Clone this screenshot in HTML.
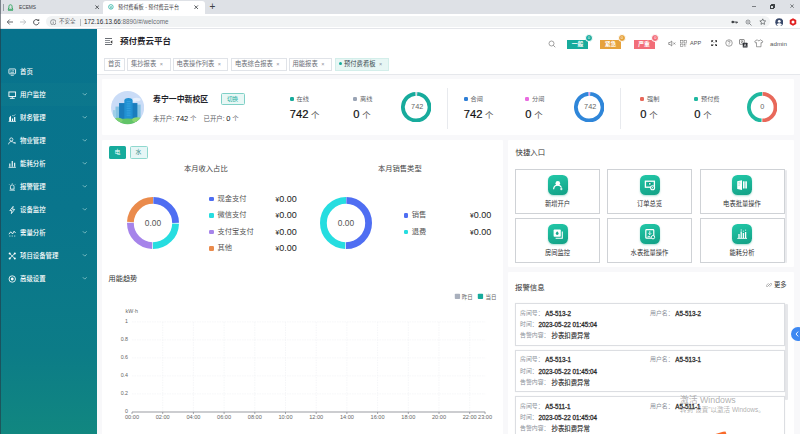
<!DOCTYPE html>
<html lang="zh-CN">
<head>
<meta charset="utf-8">
<title>预付费看板 - 预付费云平台</title>
<style>
*{box-sizing:border-box;margin:0;padding:0}
html,body{width:800px;height:434px;overflow:hidden;background:#f8f8fa}
body{position:relative;font-family:"Liberation Sans","Noto Sans CJK SC",sans-serif;color:#303133;font-size:6px;line-height:1}
.a{position:absolute;white-space:nowrap}
.t{position:absolute;white-space:nowrap;transform:translateY(-50%);line-height:1}
.c{position:absolute;white-space:nowrap;transform:translate(-50%,-50%);line-height:1}
/* browser chrome */
#tabbar{left:0;top:0;width:800px;height:14px;background:#dee1e6}
#acttab{left:103px;top:1px;width:101.500px;height:13px;background:#fff;border-radius:3px 3px 0 0}
#addr{left:0;top:14px;width:800px;height:15px;background:#fff;border-bottom:1px solid #e4e6ea}
#pill{left:46px;top:16px;width:724px;height:11px;border-radius:6px;background:#f1f3f4}
/* sidebar */
#side{left:0;top:29px;width:97px;height:405px;background:linear-gradient(180deg,#08738d 0%,#09758c 45%,#0c7c87 80%,#118780 100%)}
.mi{position:absolute;left:0;width:97px;height:23px;color:#fff;font-size:6.4px;font-weight:500}
.mi .tx{position:absolute;left:20px;top:50%;transform:translateY(-50%);white-space:nowrap}
.mi svg.ic{position:absolute;left:8px;top:50%;transform:translateY(-50%)}
.mi svg.ar{position:absolute;left:82px;top:50%;transform:translateY(-65%)}
/* header */
#head{left:97px;top:29px;width:703px;height:46px;background:#fff;border-bottom:1px solid #e6e8ec}
.tag{position:absolute;top:58px;height:12.8px;border:1px solid #e0e3e8;background:#fff;color:#6a6e76;font-size:6.3px;line-height:10.8px;padding-left:3px;white-space:nowrap}
.tag i{font-style:normal;color:#8a8f99;font-size:5.5px;margin-left:3.5px}
.card{position:absolute;background:#fff;border-radius:1px}
.dot{position:absolute;width:4px;height:4px;border-radius:1.2px}
.lab{position:absolute;white-space:nowrap;transform:translateY(-50%);font-size:6.2px;color:#606266}
.num{position:absolute;white-space:nowrap;transform:translateY(-50%);font-size:11.2px;color:#111;-webkit-text-stroke:0.2px #111}
.num span{font-size:8.4px;color:#555;margin-left:2.6px;-webkit-text-stroke:0}
.vline{position:absolute;width:1px;background:#e8eaee;top:88px;height:41px}
.qbox{position:absolute;width:85px;height:44.6px;border:1px solid #cfd2d6;background:#fff}
.qic{position:absolute;left:31.6px;top:5.3px;width:20px;height:20px;border-radius:5.5px;background:linear-gradient(165deg,#22c8a8,#12a085);box-shadow:0 1px 2px rgba(18,160,133,.35)}
.qtx{position:absolute;left:0;width:100%;text-align:center;top:30.2px;font-size:6.3px;color:#303133;line-height:8px}
.al{position:absolute;left:515px;width:270px;height:42.3px;border:1px solid #dcdee2;background:#fff;box-shadow:0 0 1px rgba(0,0,0,.08)}
.al .k{position:absolute;transform:translateY(-50%);font-size:5.9px;color:#8a8f99;white-space:nowrap}
.al .v{position:absolute;transform:translateY(-50%);font-size:6.3px;color:#2a2a2a;white-space:nowrap;-webkit-text-stroke:0.28px #2a2a2a}
</style>
</head>
<body>
<!-- ======= browser chrome ======= -->
<div class="a" id="tabbar"></div>
<div class="a" id="acttab"></div>
<div class="a" id="addr"></div>
<div class="a" id="pill"></div>
<svg class="a" style="left:7px;top:3.5px" width="7" height="7" viewBox="0 0 14 14"><path d="M7 1.5c-2 0-3.2 1.500-3.200 3.500v3l-1.800 2.500h10l-1.800-2.500v-3c0-2-1.200-3.500-3.200-3.500z" fill="none" stroke="#2aa35a" stroke-width="1.800"/><path d="M2 12.500h10" stroke="#2aa35a" stroke-width="1.800"/></svg>
<div class="t" style="left:19px;top:7.500px;font-size:4.800px;color:#3c4043">ECEMS</div>
<svg class="a" style="left:95.1px;top:5.0px" width="4.4" height="4.4" viewBox="0 0 10 10"><path d="M1 1l8 8M9 1l-8 8" stroke="#3c4043" stroke-width="1.9" fill="none"/></svg>
<svg class="a" style="left:108.200px;top:4.300px" width="5.800" height="5.800" viewBox="0 0 14 14"><circle cx="7" cy="7" r="5.500" fill="none" stroke="#1aab9b" stroke-width="1.800"/><path d="M4.500 5l2.500 2.500 2.500-2.500M7 7.500v3M5 9h4" stroke="#1aab9b" stroke-width="1.300" fill="none"/></svg>
<div class="t" style="left:118px;top:7.500px;font-size:5.150px;color:#3c4043">预付费看板 - 预付费云平台</div>
<svg class="a" style="left:194.3px;top:5.0px" width="4.4" height="4.4" viewBox="0 0 10 10"><path d="M1 1l8 8M9 1l-8 8" stroke="#3c4043" stroke-width="1.9" fill="none"/></svg>
<div class="c" style="left:212.500px;top:7px;font-size:10px;color:#3c4043">+</div>
<div class="a" style="left:751.500px;top:5.600px;width:4.500px;height:0.800px;background:#7a7d82"></div>
<div class="a" style="left:770.500px;top:3.500px;width:4px;height:4px;border:0.800px solid #3c4043;border-radius:0.500px"></div>
<div class="a" style="left:769.500px;top:4.500px;width:4px;height:4px;border:0.800px solid #3c4043;background:#dee1e6;border-radius:0.500px"></div>
<svg class="a" style="left:789.6999999999999px;top:3.6999999999999997px" width="4.2" height="4.2" viewBox="0 0 10 10"><path d="M1 1l8 8M9 1l-8 8" stroke="#3c4043" stroke-width="1.5" fill="none"/></svg>
<!-- nav -->
<svg class="a" style="left:5.500px;top:18px" width="8" height="8" viewBox="0 0 16 16"><path d="M14 8H3M7.500 3L2.500 8l5 5" fill="none" stroke="#4a4d51" stroke-width="1.700"/></svg>
<svg class="a" style="left:18.500px;top:18px" width="8" height="8" viewBox="0 0 16 16"><path d="M2 8h11M8.500 3l5 5-5 5" fill="none" stroke="#b5b8bc" stroke-width="1.700"/></svg>
<svg class="a" style="left:32px;top:17.500px" width="8.500" height="8.500" viewBox="0 0 16 16"><path d="M13 8a5 5 0 1 1-1.600-3.700" fill="none" stroke="#4a4d51" stroke-width="1.800"/><path d="M13.500 1.500v4.200H9.300z" fill="#4a4d51"/></svg>
<svg class="a" style="left:49.500px;top:18.500px" width="6.500" height="6.500" viewBox="0 0 14 14"><circle cx="7" cy="7" r="5.800" fill="none" stroke="#5f6368" stroke-width="1.300"/><path d="M7 6v4.500M7 3.500v1.300" stroke="#5f6368" stroke-width="1.400"/></svg>
<div class="t" style="left:59px;top:22px;font-size:5.500px;color:#5f6368">不安全</div>
<div class="a" style="left:79.500px;top:18.500px;width:0.700px;height:7px;background:#b8bbbf"></div>
<div class="t" style="left:84px;top:22px;font-size:6.300px;color:#2b2d30">172.16.13.66<span style="color:#696d72">:8890/#/welcome</span></div>
<!-- right icons -->
<svg class="a" style="left:731px;top:19px" width="7" height="6" viewBox="0 0 14 12"><circle cx="3.500" cy="6" r="2.600" fill="#3c4043"/><path d="M5 6h8M10.500 6v3M12.500 6v2" stroke="#3c4043" stroke-width="1.800"/></svg>
<svg class="a" style="left:745px;top:18.500px" width="7" height="7" viewBox="0 0 14 14"><circle cx="6" cy="6" r="4" fill="none" stroke="#5f6368" stroke-width="1.300"/><path d="M9 9l4 4M4 6h4" stroke="#5f6368" stroke-width="1.400"/></svg>
<svg class="a" style="left:758.500px;top:18.200px" width="7.500" height="7.500" viewBox="0 0 16 16"><path d="M8 1.800l1.900 4 4.300.5-3.200 3 .8 4.300L8 11.500l-3.800 2.100.8-4.300-3.200-3 4.300-.5z" fill="none" stroke="#3c4043" stroke-width="1.300"/></svg>
<svg class="a" style="left:774.500px;top:17.500px" width="8.500" height="8.500" viewBox="0 0 16 16"><circle cx="8" cy="8" r="7.500" fill="#3a4a6b"/><circle cx="8" cy="6.200" r="2.600" fill="#fff"/><path d="M3 12.800c1-2.400 3-3 5-3s4 .6 5 3a7 7 0 0 1-10 0z" fill="#fff"/></svg>
<svg class="a" style="left:788.500px;top:18px" width="8" height="8" viewBox="0 0 16 16"><path d="M8 .5l6.500 3.700v7.600L8 15.500l-6.500-3.700V4.200z" fill="#e02020"/><circle cx="8" cy="8" r="3" fill="#fff"/></svg>
<div class="a" style="left:3.300px;top:3.500px;width:0.700px;height:7.500px;background:#9aa0a6"></div>
<!--CHROME_END-->
<!-- ======= sidebar ======= -->
<div class="a" id="side"></div>
<div class="a" style="left:0;top:83px;width:97px;height:22.500px;background:rgba(40,150,150,.10)"></div>
<div class="mi" style="top:60.5px"><svg class="ic" width="8.500" height="8.500" viewBox="0 0 14 14"><rect x="1.500" y="2" width="11" height="8" rx="1" fill="none" stroke="#fff" stroke-width="1.400"/><path d="M4 5h1.500M7 5h3M4 7.500h6M4.500 12.500h5" stroke="#fff" stroke-width="1.200"/></svg><span class="tx">首页</span></div>
<div class="mi" style="top:83.5px"><svg class="ic" width="8.500" height="8.500" viewBox="0 0 14 14"><rect x="1.500" y="2" width="11" height="7.500" fill="none" stroke="#fff" stroke-width="1.500"/><path d="M3 12.500h8M7 9.500v3" stroke="#fff" stroke-width="1.500"/></svg><span class="tx">用户监控</span><svg class="ar" width="5.500" height="4.400" viewBox="0 0 10 8"><path d="M1.500 2l3.500 3.500L8.500 2" fill="none" stroke="#b0dede" stroke-width="1.200"/></svg></div>
<div class="mi" style="top:106.5px"><svg class="ic" width="8.500" height="8.500" viewBox="0 0 14 14"><path d="M2 12.500V6l3-3v9.500zM6.500 12.500V8h2v4.500M10 12.500V5.500h2v7z" fill="#fff"/><path d="M1 12.700h12" stroke="#fff" stroke-width="1.200"/><path d="M7 2l2 2 3-3" stroke="#fff" stroke-width="1" fill="none"/></svg><span class="tx">财务管理</span><svg class="ar" width="5.500" height="4.400" viewBox="0 0 10 8"><path d="M1.500 2l3.500 3.500L8.500 2" fill="none" stroke="#b0dede" stroke-width="1.200"/></svg></div>
<div class="mi" style="top:129.5px"><svg class="ic" width="8.500" height="8.500" viewBox="0 0 14 14"><circle cx="5.500" cy="4.500" r="2.600" fill="none" stroke="#fff" stroke-width="1.300"/><path d="M1 12.500c.3-3 2-4.500 4.500-4.500s3.500 1 4 2.500" fill="none" stroke="#fff" stroke-width="1.300"/><path d="M10 8.500l2.500 3M12.500 8.500l-2.500 3" stroke="#fff" stroke-width="1.100"/></svg><span class="tx">物业管理</span><svg class="ar" width="5.500" height="4.400" viewBox="0 0 10 8"><path d="M1.500 2l3.500 3.500L8.500 2" fill="none" stroke="#b0dede" stroke-width="1.200"/></svg></div>
<div class="mi" style="top:152.5px"><svg class="ic" width="8.500" height="8.500" viewBox="0 0 14 14"><path d="M3 11.500V6M7 11.500V2M11 11.500V5" stroke="#fff" stroke-width="1.800"/><path d="M1 12.500h12" stroke="#fff" stroke-width="1.300"/></svg><span class="tx">能耗分析</span><svg class="ar" width="5.500" height="4.400" viewBox="0 0 10 8"><path d="M1.500 2l3.500 3.500L8.500 2" fill="none" stroke="#b0dede" stroke-width="1.200"/></svg></div>
<div class="mi" style="top:175.5px"><svg class="ic" width="8.500" height="8.500" viewBox="0 0 14 14"><path d="M4 10.500V6.500a3 3 0 0 1 6 0v4z" fill="none" stroke="#fff" stroke-width="1.300"/><path d="M2.500 12.300h9M7 1v1.200M2.300 3l.9.900M11.700 3l-.9.900" stroke="#fff" stroke-width="1.200"/></svg><span class="tx">报警管理</span><svg class="ar" width="5.500" height="4.400" viewBox="0 0 10 8"><path d="M1.500 2l3.500 3.500L8.500 2" fill="none" stroke="#b0dede" stroke-width="1.200"/></svg></div>
<div class="mi" style="top:198.5px"><svg class="ic" width="8.500" height="8.500" viewBox="0 0 14 14"><path d="M8.500 1L3 8h3.500l-1 5L11 6H7.500z" fill="none" stroke="#fff" stroke-width="1.300" stroke-linejoin="round"/></svg><span class="tx">设备监控</span><svg class="ar" width="5.500" height="4.400" viewBox="0 0 10 8"><path d="M1.500 2l3.500 3.500L8.500 2" fill="none" stroke="#b0dede" stroke-width="1.200"/></svg></div>
<div class="mi" style="top:221.5px"><svg class="ic" width="8.500" height="8.500" viewBox="0 0 14 14"><path d="M1.500 9l3-4 3 3.500 2.500-4.500 2.500 3" fill="none" stroke="#fff" stroke-width="1.400"/><path d="M2 12h2M6 12h2M10 12h2" stroke="#fff" stroke-width="1.200"/></svg><span class="tx">需量分析</span><svg class="ar" width="5.500" height="4.400" viewBox="0 0 10 8"><path d="M1.500 2l3.500 3.500L8.500 2" fill="none" stroke="#b0dede" stroke-width="1.200"/></svg></div>
<div class="mi" style="top:244.5px"><svg class="ic" width="8.500" height="8.500" viewBox="0 0 14 14"><circle cx="2.800" cy="2.800" r="1.700" fill="#fff"/><circle cx="11.200" cy="2.800" r="1.700" fill="#fff"/><circle cx="2.800" cy="11.200" r="1.700" fill="#fff"/><circle cx="11.200" cy="11.200" r="1.700" fill="#fff"/><path d="M3 3l8 8M11 3l-8 8" stroke="#fff" stroke-width="1.400"/></svg><span class="tx">项目设备管理</span><svg class="ar" width="5.500" height="4.400" viewBox="0 0 10 8"><path d="M1.500 2l3.500 3.500L8.500 2" fill="none" stroke="#b0dede" stroke-width="1.200"/></svg></div>
<div class="mi" style="top:267.5px"><svg class="ic" width="8.500" height="8.500" viewBox="0 0 14 14"><circle cx="7" cy="7" r="5.300" fill="none" stroke="#fff" stroke-width="1.400"/><circle cx="7" cy="7" r="2.300" fill="#fff"/></svg><span class="tx">高级设置</span><svg class="ar" width="5.500" height="4.400" viewBox="0 0 10 8"><path d="M1.500 2l3.500 3.500L8.500 2" fill="none" stroke="#b0dede" stroke-width="1.200"/></svg></div>
<!--SIDE_END-->
<!-- ======= header ======= -->
<div class="a" id="head"></div>
<div class="a" style="left:105px;top:38px;width:7px;height:1px;background:#6a6e74"></div><div class="a" style="left:105px;top:40px;width:4.500px;height:1px;background:#8a8e94"></div><div class="a" style="left:105px;top:42px;width:4.500px;height:1px;background:#8a8e94"></div><div class="a" style="left:105px;top:44px;width:7px;height:1px;background:#6a6e74"></div><svg class="a" style="left:110px;top:39.500px" width="2.500" height="4" viewBox="0 0 2.500 4"><path d="M2.300 .3L.3 2l2 1.700z" fill="#333"/></svg>
<div class="t" style="left:120px;top:41.300px;font-size:8.500px;font-weight:bold;color:#1f2329">预付费云平台</div>
<svg class="a" style="left:548px;top:40px" width="8" height="8" viewBox="0 0 16 16"><circle cx="7" cy="7" r="5" fill="none" stroke="#666" stroke-width="1.200"/><path d="M10.800 10.800L14.500 14.500" stroke="#666" stroke-width="1.300"/></svg>
<div class="a" style="left:567px;top:39.500px;width:21px;height:9px;background:#17ab9c;color:#fff;font-size:5.800px;line-height:9px;text-align:center;font-weight:bold">一般</div>
<div class="a" style="left:584.6px;top:33.600px;width:8.400px;height:8.400px;border-radius:50%;background:#17ab9c;border:0.800px solid #fff;color:#fff;font-size:4px;line-height:6.800px;text-align:center">0</div>
<div class="a" style="left:600px;top:39.500px;width:21px;height:9px;background:#e6a23c;color:#fff;font-size:5.800px;line-height:9px;text-align:center;font-weight:bold">紧急</div>
<div class="a" style="left:617.6px;top:33.600px;width:8.400px;height:8.400px;border-radius:50%;background:#e6a23c;border:0.800px solid #fff;color:#fff;font-size:4px;line-height:6.800px;text-align:center">0</div>
<div class="a" style="left:633.500px;top:39.500px;width:21px;height:9px;background:#f26d78;color:#fff;font-size:5.800px;line-height:9px;text-align:center;font-weight:bold">严重</div>
<div class="a" style="left:651.1px;top:33.600px;width:8.400px;height:8.400px;border-radius:50%;background:#f26d78;border:0.800px solid #fff;color:#fff;font-size:4px;line-height:6.800px;text-align:center">0</div>
<svg class="a" style="left:668px;top:39.800px" width="8" height="7" viewBox="0 0 16 14"><path d="M1.500 5h2.500l3.500-3v10l-3.500-3H1.500z" fill="none" stroke="#555" stroke-width="1.200"/><path d="M10.500 5l4 4M14.500 5l-4 4" stroke="#555" stroke-width="1.100"/></svg>
<svg class="a" style="left:680px;top:40px" width="6.800" height="6.800" viewBox="0 0 15 15"><rect x="1" y="1" width="5.500" height="5.500" fill="none" stroke="#666" stroke-width="1.100"/><rect x="9" y="1" width="5" height="5.500" fill="none" stroke="#666" stroke-width="1.100"/><rect x="1" y="9" width="5.500" height="5" fill="none" stroke="#666" stroke-width="1.100"/><path d="M9 9h2v2H9zM12.500 9h2M9 13.500h2M12.500 12v2.500" stroke="#666" stroke-width="1.100" fill="none"/></svg>
<div class="t" style="left:690px;top:44.200px;font-size:5.600px;color:#555">APP</div>
<svg class="a" style="left:710.700px;top:40.200px" width="6.400" height="6.400" viewBox="0 0 12 12"><path d="M.5.5h4.200L.5 4.700zM11.500.5v4.200L7.300.5zM.5 11.500V7.300l4.200 4.200zM11.500 11.500H7.300l4.200-4.200z" fill="#222"/><path d="M2 2l2.500 2.500M10 2L7.500 4.500M2 10l2.500-2.500M10 10L7.500 7.500" stroke="#222" stroke-width="1.300"/></svg>
<svg class="a" style="left:724.500px;top:39.300px" width="8" height="8" viewBox="0 0 16 16"><circle cx="8" cy="8" r="6.500" fill="none" stroke="#555" stroke-width="1.100"/><path d="M5.800 6.300c0-1.400 1-2.300 2.200-2.300s2.200.9 2.200 2.100c0 1.600-2.200 1.700-2.200 3.400M8 11v1.300" fill="none" stroke="#555" stroke-width="1.100"/></svg>
<svg class="a" style="left:739.200px;top:38.600px" width="9" height="9" viewBox="0 0 18 18"><rect x="1" y="1" width="9.500" height="9.500" rx="1" fill="#fff" stroke="#444" stroke-width="1.200"/><path d="M3.500 4h4.500M5.700 3v1M4 7.500c2-.5 3-2 3.200-3.500M4.300 5.500c.5 1 1.500 1.800 3 2.200" stroke="#444" stroke-width=".9" fill="none"/><rect x="7.500" y="7.500" width="9.500" height="9.500" rx="1" fill="#2a2d33"/><path d="M10 15.500l2.200-6 2.200 6M10.800 13.500h2.800" stroke="#fff" stroke-width="1" fill="none"/></svg>
<svg class="a" style="left:754px;top:39.300px" width="9.500" height="8.500" viewBox="0 0 19 17"><path d="M6.500 1.500L1.500 4.500l1.500 3.500 2-.8V15.500h9V7.200l2 .8 1.500-3.500-5-3c-.5 1.300-1.600 2-3 2s-2.500-.7-3-2z" fill="none" stroke="#555" stroke-width="1.100" stroke-linejoin="round"/></svg>
<div class="t" style="left:770px;top:44px;font-size:6.200px;color:#555">admin</div>
<!-- tags -->
<div class="tag" style="left:104px;width:20.500px">首页</div>
<div class="tag" style="left:127px;width:43.500px">集抄报表<i>×</i></div>
<div class="tag" style="left:172.500px;width:55px">电表操作列表<i>×</i></div>
<div class="tag" style="left:231px;width:55.500px">电表综合报表<i>×</i></div>
<div class="tag" style="left:288.500px;width:43.200px">用能报表<i>×</i></div>
<div class="tag" style="left:334.500px;width:54.500px;background:#e7f6f4;border-color:#d3eeea;color:#3a4a52"><span style="display:inline-block;width:3px;height:3px;border-radius:50%;background:#17ab9c;vertical-align:0.600px;margin-right:2.500px"></span>预付费看板<i>×</i></div>
<!--HEAD_END-->
<!-- ======= content ======= -->
<!--CONTENT_START-->
<div class="card" style="left:101.500px;top:79px;width:692.500px;height:55.700px"></div>
<svg class="a" style="left:110.900px;top:91.400px" width="33.200" height="33.200" viewBox="0 0 66 66"><defs><clipPath id="av"><circle cx="33" cy="33" r="33"/></clipPath></defs><g clip-path="url(#av)"><rect width="66" height="66" fill="#cadcf7"/><ellipse cx="51" cy="17" rx="8" ry="3.500" fill="#e6effc"/><ellipse cx="46" cy="19" rx="5" ry="2.500" fill="#e6effc"/><rect x="9" y="31" width="8" height="30" fill="#86c3e2"/><rect x="51" y="27" width="8" height="33" fill="#86c3e2"/><rect x="4" y="38" width="6" height="22" fill="#9fd0e8"/><rect x="16" y="24" width="36.500" height="38" fill="#1a7dbd"/><path d="M26.500 62V19c0-3 3-5 8.200-5s8.300 2 8.300 5v43z" fill="#2191d2"/><path d="M31 21h8M31 24.500h8M31 28h8M31 31.500h8M31 35h8M31 38.500h8M31 42h8M31 45.500h8M31 49h8" stroke="#3aa6e4" stroke-width="1.400"/><ellipse cx="33" cy="68" rx="38" ry="13.500" fill="#62c468"/><ellipse cx="14" cy="58" rx="9" ry="5" fill="#7ad070"/><ellipse cx="52" cy="57" rx="10" ry="5" fill="#8ad672"/></g></svg>
<div class="t" style="left:153px;top:99.800px;font-size:7.900px;font-weight:bold;color:#1f2329">寿宁一中新校区</div>
<div class="a" style="left:220.500px;top:93.200px;width:24px;height:12.300px;border:1px solid #7fd0c6;background:#e8f7f5;color:#17ab9c;font-size:5.600px;line-height:10px;text-align:center;border-radius:1.500px">切换</div>
<div class="t" style="left:153px;top:118.900px;font-size:6.400px;color:#606266">未开户: <span style="font-size:7.500px;color:#111">742</span> 个&nbsp;&nbsp;&nbsp;&nbsp;已开户: <span style="font-size:7.500px;color:#111">0</span> 个</div>
<div class="dot" style="left:289.5px;top:96.800px;background:#17ab9c"></div>
<div class="lab" style="left:296.5px;top:99.400px">在线</div>
<div class="num" style="left:289.8px;top:115.300px">742<span>个</span></div>
<div class="dot" style="left:353.0px;top:96.800px;background:#9aa4b5"></div>
<div class="lab" style="left:360.0px;top:99.400px">离线</div>
<div class="num" style="left:353.3px;top:115.300px">0<span>个</span></div>
<div class="dot" style="left:463.5px;top:96.800px;background:#2f7fd6"></div>
<div class="lab" style="left:470.5px;top:99.400px">合闸</div>
<div class="num" style="left:463.8px;top:115.300px">742<span>个</span></div>
<div class="dot" style="left:525.0px;top:96.800px;background:#e96be0"></div>
<div class="lab" style="left:532.0px;top:99.400px">分闸</div>
<div class="num" style="left:525.3px;top:115.300px">0<span>个</span></div>
<div class="dot" style="left:640.0px;top:96.800px;background:#e8685a"></div>
<div class="lab" style="left:647.0px;top:99.400px">强制</div>
<div class="num" style="left:640.3px;top:115.300px">0<span>个</span></div>
<div class="dot" style="left:694.0px;top:96.800px;background:#1fb8a0"></div>
<div class="lab" style="left:701.0px;top:99.400px">预付费</div>
<div class="num" style="left:694.3px;top:115.300px">0<span>个</span></div>
<div class="vline" style="left:447px"></div>
<div class="vline" style="left:619.800px"></div>
<svg class="a" style="left:401.0px;top:92.1px" width="30.4" height="30.4" viewBox="0 0 30.4 30.4"><circle cx="15.2" cy="15.2" r="13.299999999999999" fill="none" stroke="#17ab9c" stroke-width="3.8" stroke-dasharray="81.477 2.089" stroke-dashoffset="-0.000" transform="rotate(-86 15.2 15.2)"/><circle cx="15.2" cy="15.2" r="13.299999999999999" fill="none" stroke="#d5d9e0" stroke-width="3.8" stroke-dasharray="2.089 81.477" stroke-dashoffset="-81.477" transform="rotate(-86 15.2 15.2)"/><text x="16.2" y="16.928" text-anchor="middle" font-size="7.3" fill="#666" font-family="Liberation Sans, sans-serif">742</text></svg>
<svg class="a" style="left:574.0px;top:92.1px" width="30.4" height="30.4" viewBox="0 0 30.4 30.4"><circle cx="15.2" cy="15.2" r="13.299999999999999" fill="none" stroke="#2f86d9" stroke-width="3.8" stroke-dasharray="81.477 2.089" stroke-dashoffset="-0.000" transform="rotate(-86 15.2 15.2)"/><circle cx="15.2" cy="15.2" r="13.299999999999999" fill="none" stroke="#eaa6e8" stroke-width="3.8" stroke-dasharray="2.089 81.477" stroke-dashoffset="-81.477" transform="rotate(-86 15.2 15.2)"/><text x="16.2" y="16.928" text-anchor="middle" font-size="7.3" fill="#666" font-family="Liberation Sans, sans-serif">742</text></svg>
<svg class="a" style="left:747.0px;top:92.1px" width="30.4" height="30.4" viewBox="0 0 30.4 30.4"><circle cx="15.2" cy="15.2" r="13.299999999999999" fill="none" stroke="#e8685a" stroke-width="3.8" stroke-dasharray="40.983 42.583" stroke-dashoffset="-0.400" transform="rotate(-90 15.2 15.2)"/><circle cx="15.2" cy="15.2" r="13.299999999999999" fill="none" stroke="#1fb8a0" stroke-width="3.8" stroke-dasharray="40.983 42.583" stroke-dashoffset="-42.183" transform="rotate(-90 15.2 15.2)"/><text x="15.2" y="16.928" text-anchor="middle" font-size="7.3" fill="#666" font-family="Liberation Sans, sans-serif">0</text></svg>
<div class="card" style="left:101.500px;top:140px;width:401px;height:300px"></div>
<div class="a" style="left:109px;top:146px;width:17px;height:12.500px;background:#17ab9c;color:#fff;font-size:5.800px;line-height:13.800px;text-align:center;border-radius:1.500px;overflow:hidden">电</div>
<div class="a" style="left:129.500px;top:146px;width:18px;height:12.500px;border:1px solid #8fd8ce;background:#e6f6f6;color:#3d8f88;font-size:5.800px;line-height:11.800px;text-align:center;border-radius:1.500px;overflow:hidden">水</div>
<div class="c" style="left:205.800px;top:169.200px;font-size:7.300px;color:#444">本月收入占比</div>
<div class="c" style="left:399.800px;top:169.200px;font-size:7.300px;color:#444">本月销售类型</div>
<svg class="a" style="left:126.75px;top:197px" width="52" height="52" viewBox="0 0 52 52"><circle cx="26" cy="26" r="22.6" fill="none" stroke="#4f6ef2" stroke-width="6.8" stroke-dasharray="34.800 107.200" stroke-dashoffset="-0.350" transform="rotate(-90 26 26)"/><circle cx="26" cy="26" r="22.6" fill="none" stroke="#26dde0" stroke-width="6.8" stroke-dasharray="34.800 107.200" stroke-dashoffset="-35.850" transform="rotate(-90 26 26)"/><circle cx="26" cy="26" r="22.6" fill="none" stroke="#a684ea" stroke-width="6.8" stroke-dasharray="34.800 107.200" stroke-dashoffset="-71.350" transform="rotate(-90 26 26)"/><circle cx="26" cy="26" r="22.6" fill="none" stroke="#ea8b4c" stroke-width="6.8" stroke-dasharray="34.800 107.200" stroke-dashoffset="-106.850" transform="rotate(-90 26 26)"/><text x="26" y="28.524" text-anchor="middle" font-size="8.4" fill="#555" font-family="Liberation Sans, sans-serif">0.00</text></svg>
<svg class="a" style="left:320.25px;top:197px" width="52" height="52" viewBox="0 0 52 52"><circle cx="26" cy="26" r="22.6" fill="none" stroke="#4f6ef2" stroke-width="6.8" stroke-dasharray="70.300 71.700" stroke-dashoffset="-0.350" transform="rotate(-90 26 26)"/><circle cx="26" cy="26" r="22.6" fill="none" stroke="#26dde0" stroke-width="6.8" stroke-dasharray="70.300 71.700" stroke-dashoffset="-71.350" transform="rotate(-90 26 26)"/><text x="26" y="28.524" text-anchor="middle" font-size="8.4" fill="#555" font-family="Liberation Sans, sans-serif">0.00</text></svg>
<div class="dot" style="left:209.300px;top:196.60000000000002px;background:#4f6ef2;width:4.500px;height:4.500px"></div>
<div class="t" style="left:217.400px;top:198.8px;font-size:7.250px;color:#555">现金支付</div>
<div class="t" style="left:275.500px;top:198.5px;font-size:9px;color:#222"><span style="font-size:6.500px">¥</span>0.00</div>
<div class="dot" style="left:209.300px;top:213.10000000000002px;background:#26dde0;width:4.500px;height:4.500px"></div>
<div class="t" style="left:217.400px;top:215.3px;font-size:7.250px;color:#555">微信支付</div>
<div class="t" style="left:275.500px;top:215.0px;font-size:9px;color:#222"><span style="font-size:6.500px">¥</span>0.00</div>
<div class="dot" style="left:209.300px;top:229.60000000000002px;background:#a684ea;width:4.500px;height:4.500px"></div>
<div class="t" style="left:217.400px;top:231.8px;font-size:7.250px;color:#555">支付宝支付</div>
<div class="t" style="left:275.500px;top:231.5px;font-size:9px;color:#222"><span style="font-size:6.500px">¥</span>0.00</div>
<div class="dot" style="left:209.300px;top:246.10000000000002px;background:#ea8b4c;width:4.500px;height:4.500px"></div>
<div class="t" style="left:217.400px;top:248.3px;font-size:7.250px;color:#555">其他</div>
<div class="t" style="left:275.500px;top:248.0px;font-size:9px;color:#222"><span style="font-size:6.500px">¥</span>0.00</div>
<div class="dot" style="left:403.800px;top:213.10000000000002px;background:#4f6ef2;width:4.500px;height:4.500px"></div>
<div class="t" style="left:411.700px;top:215.3px;font-size:7.250px;color:#555">销售</div>
<div class="t" style="left:470px;top:215.0px;font-size:9px;color:#222"><span style="font-size:6.500px">¥</span>0.00</div>
<div class="dot" style="left:403.800px;top:229.60000000000002px;background:#26dde0;width:4.500px;height:4.500px"></div>
<div class="t" style="left:411.700px;top:231.8px;font-size:7.250px;color:#555">退费</div>
<div class="t" style="left:470px;top:231.5px;font-size:9px;color:#222"><span style="font-size:6.500px">¥</span>0.00</div>
<div class="t" style="left:108.500px;top:278.500px;font-size:7.200px;color:#333">用能趋势</div>
<svg class="a" style="left:101px;top:290px" width="402" height="144" viewBox="101 290 402 144" font-family="Liberation Sans, Noto Sans CJK SC, sans-serif"><rect x="454.800" y="293.800" width="5.300" height="5.300" rx="0.800" fill="#a9b0bd"/><text x="461.700" y="298.600" font-size="5.500" fill="#666">昨日</text><rect x="477.800" y="293.800" width="5.300" height="5.300" rx="0.800" fill="#17ab9c"/><text x="485.600" y="298.600" font-size="5.500" fill="#666">当日</text><text x="125.600" y="313.100" font-size="5.300" fill="#666">kW·h</text><text x="128" y="322.79999999999995" font-size="5.300" fill="#666" text-anchor="end">1</text><path d="M132 321.9H485.200" stroke="#eef0f3" stroke-width="0.600" stroke-dasharray="1.500 1"/><text x="128" y="340.79999999999995" font-size="5.300" fill="#666" text-anchor="end">0.8</text><path d="M132 339.9H485.200" stroke="#eef0f3" stroke-width="0.600" stroke-dasharray="1.500 1"/><text x="128" y="358.79999999999995" font-size="5.300" fill="#666" text-anchor="end">0.6</text><path d="M132 357.9H485.200" stroke="#eef0f3" stroke-width="0.600" stroke-dasharray="1.500 1"/><text x="128" y="376.79999999999995" font-size="5.300" fill="#666" text-anchor="end">0.4</text><path d="M132 375.9H485.200" stroke="#eef0f3" stroke-width="0.600" stroke-dasharray="1.500 1"/><text x="128" y="394.79999999999995" font-size="5.300" fill="#666" text-anchor="end">0.2</text><path d="M132 393.9H485.200" stroke="#eef0f3" stroke-width="0.600" stroke-dasharray="1.500 1"/><text x="128" y="412.79999999999995" font-size="5.300" fill="#666" text-anchor="end">0</text><path d="M162.7 322V412" stroke="#eef0f3" stroke-width="0.600" stroke-dasharray="1.500 1"/><path d="M193.4 322V412" stroke="#eef0f3" stroke-width="0.600" stroke-dasharray="1.500 1"/><path d="M224.1 322V412" stroke="#eef0f3" stroke-width="0.600" stroke-dasharray="1.500 1"/><path d="M254.8 322V412" stroke="#eef0f3" stroke-width="0.600" stroke-dasharray="1.500 1"/><path d="M285.5 322V412" stroke="#eef0f3" stroke-width="0.600" stroke-dasharray="1.500 1"/><path d="M316.2 322V412" stroke="#eef0f3" stroke-width="0.600" stroke-dasharray="1.500 1"/><path d="M346.9 322V412" stroke="#eef0f3" stroke-width="0.600" stroke-dasharray="1.500 1"/><path d="M377.6 322V412" stroke="#eef0f3" stroke-width="0.600" stroke-dasharray="1.500 1"/><path d="M408.3 322V412" stroke="#eef0f3" stroke-width="0.600" stroke-dasharray="1.500 1"/><path d="M439.0 322V412" stroke="#eef0f3" stroke-width="0.600" stroke-dasharray="1.500 1"/><path d="M469.7 322V412" stroke="#eef0f3" stroke-width="0.600" stroke-dasharray="1.500 1"/><path d="M132 412H485.200" stroke="#6e7079" stroke-width="0.700"/><path d="M132.0 412v2" stroke="#6e7079" stroke-width="0.600"/><text x="132.0" y="419.300" font-size="5.600" fill="#666" text-anchor="middle">00:00</text><path d="M162.7 412v2" stroke="#6e7079" stroke-width="0.600"/><text x="162.7" y="419.300" font-size="5.600" fill="#666" text-anchor="middle">02:00</text><path d="M193.4 412v2" stroke="#6e7079" stroke-width="0.600"/><text x="193.4" y="419.300" font-size="5.600" fill="#666" text-anchor="middle">04:00</text><path d="M224.1 412v2" stroke="#6e7079" stroke-width="0.600"/><text x="224.1" y="419.300" font-size="5.600" fill="#666" text-anchor="middle">06:00</text><path d="M254.8 412v2" stroke="#6e7079" stroke-width="0.600"/><text x="254.8" y="419.300" font-size="5.600" fill="#666" text-anchor="middle">08:00</text><path d="M285.5 412v2" stroke="#6e7079" stroke-width="0.600"/><text x="285.5" y="419.300" font-size="5.600" fill="#666" text-anchor="middle">10:00</text><path d="M316.2 412v2" stroke="#6e7079" stroke-width="0.600"/><text x="316.2" y="419.300" font-size="5.600" fill="#666" text-anchor="middle">12:00</text><path d="M346.9 412v2" stroke="#6e7079" stroke-width="0.600"/><text x="346.9" y="419.300" font-size="5.600" fill="#666" text-anchor="middle">14:00</text><path d="M377.6 412v2" stroke="#6e7079" stroke-width="0.600"/><text x="377.6" y="419.300" font-size="5.600" fill="#666" text-anchor="middle">16:00</text><path d="M408.3 412v2" stroke="#6e7079" stroke-width="0.600"/><text x="408.3" y="419.300" font-size="5.600" fill="#666" text-anchor="middle">18:00</text><path d="M439.0 412v2" stroke="#6e7079" stroke-width="0.600"/><text x="439.0" y="419.300" font-size="5.600" fill="#666" text-anchor="middle">20:00</text><path d="M469.7 412v2" stroke="#6e7079" stroke-width="0.600"/><text x="469.7" y="419.300" font-size="5.600" fill="#666" text-anchor="middle">22:00</text><path d="M485.05 412v2" stroke="#6e7079" stroke-width="0.600"/><text x="485.05" y="419.300" font-size="5.600" fill="#666" text-anchor="middle">23:00</text></svg>
<div class="card" style="left:508px;top:140px;width:286px;height:126.500px"></div>
<div class="t" style="left:515.500px;top:153.200px;font-size:7.400px;color:#333">快捷入口</div>
<div class="qbox" style="left:515px;top:169px"><div class="qic"><svg width="20" height="20" viewBox="0 0 20 20" style="display:block"><circle cx="9.800" cy="8.200" r="2.300" fill="#fff"/><path d="M5.600 14.200c.2-2.600 1.900-4 4.200-4 1.700 0 3 .8 3.700 2.200" fill="none" stroke="#fff" stroke-width="1.200"/><path d="M13.300 12.800v2.400M12.100 14h2.400" stroke="#fff" stroke-width=".9"/></svg></div><div class="qtx">新增开户</div></div>
<div class="qbox" style="left:607px;top:169px"><div class="qic"><svg width="20" height="20" viewBox="0 0 20 20" style="display:block"><rect x="5.400" y="6.200" width="9" height="6" fill="none" stroke="#fff" stroke-width="1.300"/><path d="M7.500 8.200c1.500-1.200 3.500-1.200 5 .8-1.500 1.500-3.500 1.500-5-.8z" fill="#0f8f78"/><circle cx="9.800" cy="8.800" r=".9" fill="#fff"/><circle cx="12.600" cy="12.700" r="2" fill="#18a88e" stroke="#fff" stroke-width="1.100"/><circle cx="12.600" cy="12.700" r=".6" fill="#fff"/></svg></div><div class="qtx">订单总览</div></div>
<div class="qbox" style="left:699.5px;top:169px"><div class="qic"><svg width="20" height="20" viewBox="0 0 20 20" style="display:block"><path d="M5.200 6.300l4.800-1v9.700l-4.800-1z" fill="#fff"/><path d="M6.500 7.500l2-.4M6.500 9l2-.3M6.500 10.500l1.200-.1" stroke="#8fd6c6" stroke-width=".6"/><rect x="11" y="6.300" width="1.600" height="7.200" fill="#fff"/><rect x="13.300" y="6.300" width="1.600" height="7.200" fill="#fff"/></svg></div><div class="qtx">电表批量操作</div></div>
<div class="qbox" style="left:515px;top:218px"><div class="qic"><svg width="20" height="20" viewBox="0 0 20 20" style="display:block"><rect x="5.600" y="5.600" width="7.200" height="7.200" rx=".8" fill="#fff"/><path d="M14.300 7.600v6.700H7.600" fill="none" stroke="#fff" stroke-width="1.100"/><path d="M9.200 7.300c.9 1 1.400 1.700 1.400 2.300a1.400 1.400 0 0 1-2.800 0c0-.6.500-1.300 1.400-2.300z" fill="#16a88d"/></svg></div><div class="qtx">房间监控</div></div>
<div class="qbox" style="left:607px;top:218px"><div class="qic"><svg width="20" height="20" viewBox="0 0 20 20" style="display:block"><rect x="5.800" y="5.600" width="8" height="8.600" rx=".8" fill="none" stroke="#fff" stroke-width="1.200"/><path d="M9.800 7.200v3.300M8.400 9.300l1.400 1.400 1.400-1.400M7.600 12.400h2.600" stroke="#fff" stroke-width=".9" fill="none"/><circle cx="13" cy="13.200" r="1.700" fill="#16a88d" stroke="#fff" stroke-width=".9"/></svg></div><div class="qtx">水表批量操作</div></div>
<div class="qbox" style="left:699.5px;top:218px"><div class="qic"><svg width="20" height="20" viewBox="0 0 20 20" style="display:block"><path d="M7 14V10M9.200 14V7.500M11.400 14V9M13.600 14V8" stroke="#fff" stroke-width="1.300"/><path d="M5.300 14.400h9.700" stroke="#fff" stroke-width=".9"/><path d="M9.200 5v2M11.400 6.500v1.500M13.600 5.500v1.500" stroke="#fff" stroke-width=".6"/></svg></div><div class="qtx">能耗分析</div></div>
<div class="a" style="left:784.500px;top:169.500px;width:2.500px;height:93px;background:#e9eaed;border-radius:1px"></div>
<div class="card" style="left:508px;top:272px;width:286px;height:170px"></div>
<div class="t" style="left:515px;top:287.800px;font-size:7.400px;color:#333">报警信息</div>
<svg class="a" style="left:765.500px;top:282px" width="6" height="6" viewBox="0 0 12 12"><path d="M5 7l4-4a1.600 1.600 0 0 1 2.200 2.200L7 9.500M7 5L3 9a1.600 1.600 0 0 1-2.200-2.200L5 2.500" fill="none" stroke="#777" stroke-width="1.100"/></svg>
<div class="t" style="left:774px;top:285.200px;font-size:6.300px;color:#333">更多</div>
<div class="a" style="left:785px;top:304px;width:2.500px;height:96px;background:#e6e7ea;border-radius:1px"></div>
<div class="al" style="top:303.25px"><span class="k" style="left:4px;top:9.650px">房间号：</span><span class="v" style="left:29.200px;top:9.650px">A5-513-2</span><span class="k" style="left:134px;top:9.650px">用户名：</span><span class="v" style="left:159.200px;top:9.650px">A5-513-2</span><span class="k" style="left:4px;top:21.050px">时间：</span><span class="v" style="left:22.500px;top:21.050px">2023-05-22 01:45:04</span><span class="k" style="left:4px;top:31.850px">告警内容：</span><span class="v" style="left:35.500px;top:31.850px;font-size:6.400px;-webkit-text-stroke-width:0.120px">抄表扣费异常</span></div>
<div class="al" style="top:349.85px"><span class="k" style="left:4px;top:9.650px">房间号：</span><span class="v" style="left:29.200px;top:9.650px">A5-513-1</span><span class="k" style="left:134px;top:9.650px">用户名：</span><span class="v" style="left:159.200px;top:9.650px">A5-513-1</span><span class="k" style="left:4px;top:21.050px">时间：</span><span class="v" style="left:22.500px;top:21.050px">2023-05-22 01:45:04</span><span class="k" style="left:4px;top:31.850px">告警内容：</span><span class="v" style="left:35.500px;top:31.850px;font-size:6.400px;-webkit-text-stroke-width:0.120px">抄表扣费异常</span></div>
<div class="al" style="top:396.45px"><span class="k" style="left:4px;top:9.650px">房间号：</span><span class="v" style="left:29.200px;top:9.650px">A5-511-1</span><span class="k" style="left:134px;top:9.650px">用户名：</span><span class="v" style="left:159.200px;top:9.650px">A5-511-1</span><span class="k" style="left:4px;top:21.050px">时间：</span><span class="v" style="left:22.500px;top:21.050px">2023-05-22 01:45:04</span><span class="k" style="left:4px;top:31.850px">告警内容：</span><span class="v" style="left:35.500px;top:31.850px;font-size:6.400px;-webkit-text-stroke-width:0.120px">抄表扣费异常</span></div>
<div class="t" style="left:680px;top:399.800px;font-size:8.800px;color:rgba(120,120,120,.6)">激活 Windows</div>
<div class="t" style="left:680px;top:409.600px;font-size:6.500px;color:rgba(120,120,120,.6)">转到"设置"以激活 Windows。</div>
<div class="a" style="left:791px;top:327px;width:14px;height:14px;border-radius:50%;background:#3d88f2"></div>
<svg class="a" style="left:795px;top:331px" width="4" height="6" viewBox="0 0 4 6"><path d="M3.200 .6L1 3l2.200 2.400" fill="none" stroke="#fff" stroke-width=".9"/></svg>
<svg class="a" style="left:715px;top:431px" width="12" height="3" viewBox="0 0 12 3"><path d="M0.500 3L8 0.800l2.500-.3 .9 2.500z" fill="#f96a2a"/></svg>
<!--CONTENT_END-->
<div class="a" style="left:0;top:0;width:0.800px;height:434px;background:rgba(40,50,60,.55)"></div>
</body>
</html>
